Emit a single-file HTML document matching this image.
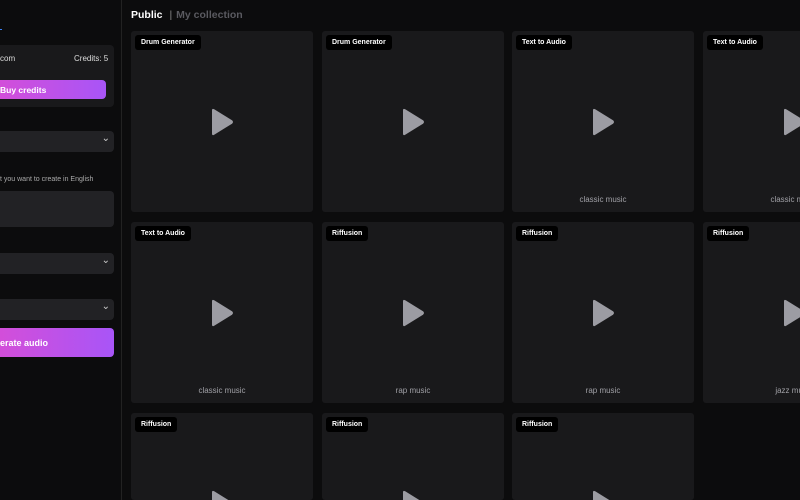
<!DOCTYPE html>
<html style="width:800px;height:500px;overflow:hidden"><head><style>
*{box-sizing:border-box;margin:0;padding:0}
body{width:800px;height:500px;overflow:hidden;background:#0c0c0d;font-family:"Liberation Sans",sans-serif;position:relative;color:#fff}
.side{position:absolute;left:0;top:0;width:122px;height:500px;border-right:1px solid #222}
.abs{position:absolute}
.box{background:#19191b;border-radius:4px}
.sel{background:#222225;border-radius:4px;left:-6px;width:120px;height:21px}
.sel:after{content:"⌄";position:absolute;right:4px;top:2px;font-size:10px;color:#ccc}
.grad{background:linear-gradient(90deg,#d54ed8,#a855f7);border-radius:4px;font-weight:bold}
.card{position:absolute;width:182px;height:181px;background:#19191b;border-radius:3px;overflow:hidden}
.tag{position:absolute;left:4px;top:4px;background:#000;color:#fff;font-size:7px;font-weight:bold;padding:4px 6px;border-radius:3px}
.play{position:absolute;left:79px;top:77px}
.cap{position:absolute;left:0;right:0;top:164px;text-align:center;font-size:8px;color:#a0a0a6}
</style></head><body>
<div class="side">
<div class="abs" style="left:0;top:29px;width:2px;height:1px;background:#3b82f6"></div>
<div class="abs box" style="left:-6px;top:45px;width:120px;height:62px"></div>
<div class="abs" style="left:0;top:54px;font-size:8px;color:#ddd">com</div>
<div class="abs" style="left:74px;top:54px;font-size:8px;color:#ddd">Credits: 5</div>
<div class="abs grad" style="left:-6px;top:80px;width:112px;height:19px;font-size:8.5px;padding:5px 0 0 6px">Buy credits</div>
<div class="abs sel" style="top:131px"></div>
<div class="abs" style="left:0;top:176px;font-size:7px;color:#aaa">t you want to create in English</div>
<div class="abs" style="left:-6px;top:191px;width:120px;height:36px;background:#222225;border-radius:4px"></div>
<div class="abs sel" style="top:253px"></div>
<div class="abs sel" style="top:299px"></div>
<div class="abs grad" style="left:-6px;top:328px;width:120px;height:29px;font-size:9px;padding:10px 0 0 6px">erate audio</div>
</div>
<div class="abs" style="left:131px;top:9px;font-size:10.5px;font-weight:bold">Public <span style="color:#888;font-weight:normal;margin:0 4px">|</span><span style="color:#5a5a60">My collection</span></div>
<svg width="0" height="0" style="position:absolute"><defs><symbol id="p" viewBox="0 0 24 28"><path d="M2 2.5Q2 0 4.2 1.3L22 12.3Q24 14 22 15.7L4.2 26.7Q2 28 2 25.5Z" fill="#9c9ca3"/></symbol></defs></svg>
<div class="card" style="left:131px;top:31px"><span class="tag">Drum Generator</span><svg class="play" width="24" height="28"><use href="#p"/></svg></div>
<div class="card" style="left:322px;top:31px"><span class="tag">Drum Generator</span><svg class="play" width="24" height="28"><use href="#p"/></svg></div>
<div class="card" style="left:512px;top:31px"><span class="tag">Text to Audio</span><svg class="play" width="24" height="28"><use href="#p"/></svg><div class="cap">classic music</div></div>
<div class="card" style="left:703px;top:31px"><span class="tag">Text to Audio</span><svg class="play" width="24" height="28"><use href="#p"/></svg><div class="cap">classic music</div></div>
<div class="card" style="left:131px;top:222px"><span class="tag">Text to Audio</span><svg class="play" width="24" height="28"><use href="#p"/></svg><div class="cap">classic music</div></div>
<div class="card" style="left:322px;top:222px"><span class="tag">Riffusion</span><svg class="play" width="24" height="28"><use href="#p"/></svg><div class="cap">rap music</div></div>
<div class="card" style="left:512px;top:222px"><span class="tag">Riffusion</span><svg class="play" width="24" height="28"><use href="#p"/></svg><div class="cap">rap music</div></div>
<div class="card" style="left:703px;top:222px"><span class="tag">Riffusion</span><svg class="play" width="24" height="28"><use href="#p"/></svg><div class="cap">jazz music</div></div>
<div class="card" style="left:131px;top:413px;height:87px"><span class="tag">Riffusion</span><svg class="play" width="24" height="28"><use href="#p"/></svg></div>
<div class="card" style="left:322px;top:413px;height:87px"><span class="tag">Riffusion</span><svg class="play" width="24" height="28"><use href="#p"/></svg></div>
<div class="card" style="left:512px;top:413px;height:87px"><span class="tag">Riffusion</span><svg class="play" width="24" height="28"><use href="#p"/></svg></div>
</body></html>
